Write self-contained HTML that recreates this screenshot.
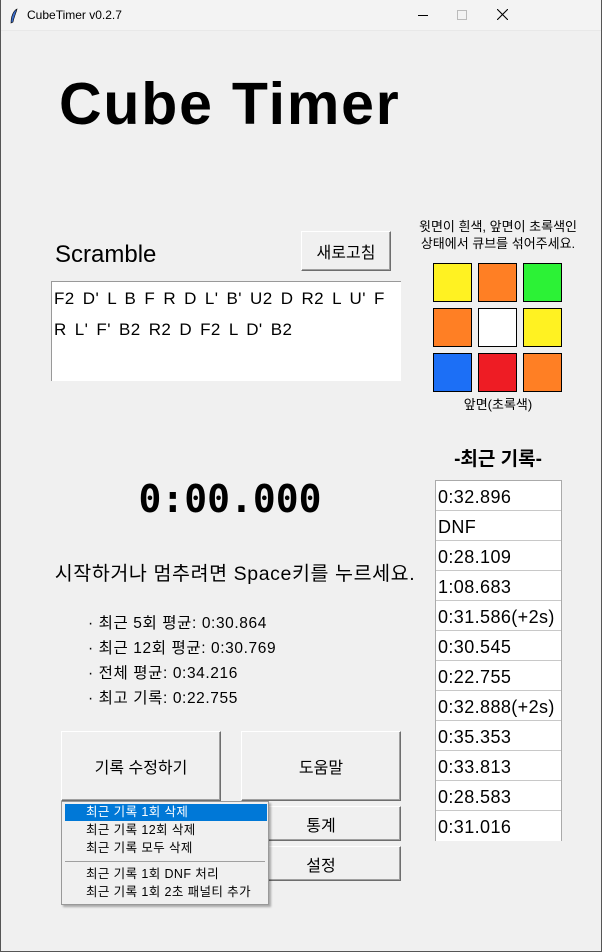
<!DOCTYPE html>
<html><head><meta charset="utf-8"><style>
*{margin:0;padding:0;box-sizing:border-box}
body{width:602px;height:952px;background:#f0f0f0;font-family:"Liberation Sans","Noto Sans CJK KR",sans-serif;position:relative;overflow:hidden;color:#000}
.abs{position:absolute}
.tb{left:0;top:0;width:602px;height:31px;background:#f3f3f3;border-bottom:1px solid #e8e8e8}
.btn{position:absolute;background:#f0f0f0;border:1px solid #fff;border-right-color:#6e6e6e;border-bottom-color:#6e6e6e;box-shadow:inset -1px -1px 0 #a0a0a0;display:flex;align-items:center;justify-content:center;font-size:16px}
.cell{position:absolute;width:39px;height:39px;border:1px solid #000}
.rec{position:absolute;left:436px;width:125px;height:30px;background:#fff;border-bottom:1px solid #c8c8c8;font-size:18px;padding-left:2px;line-height:32px;letter-spacing:0.4px}
.st{position:absolute;left:88px;font-size:15.5px;letter-spacing:0.6px}
.mi{position:absolute;left:3px;width:202px;height:17px;font-size:12.5px;padding-left:21px;line-height:17px;letter-spacing:0.4px}
</style></head><body>
<div class="abs" style="left:0;top:0;width:602px;height:952px;border:1px solid #555;border-top:none;z-index:5;pointer-events:none"></div>
<div class="abs" style="left:111px;top:0;width:42px;height:1px;background:#c33"></div>
<div class="abs tb">
 <svg class="abs" style="left:9px;top:8px" width="10" height="16"><path d="M8 1 C4 3 2 9 2 15 L4 14 C5 9 7 5 8 1Z" fill="#3a6bc9" stroke="#000" stroke-width=".6"/></svg>
 <div class="abs" style="left:27px;top:8px;font-size:12px">CubeTimer v0.2.7</div>
 <div class="abs" style="left:418px;top:15px;width:10px;height:1px;background:#000"></div>
 <div class="abs" style="left:457px;top:10px;width:10px;height:10px;border:1px solid #bbb"></div>
 <svg class="abs" style="left:497px;top:9px" width="11" height="11"><path d="M0 0L11 11M11 0L0 11" stroke="#000" stroke-width="1.1"/></svg>
</div>
<div class="abs" style="left:59px;top:70px;font-size:59px;font-weight:bold;letter-spacing:1.8px">Cube Timer</div>
<div class="abs" style="left:55px;top:241px;font-size:24px">Scramble</div>
<div class="btn" style="left:301px;top:231px;width:90px;height:40px">새로고침</div>
<div class="abs" style="left:51px;top:281px;width:350px;height:100px;background:#fff;border-left:1px solid #999;border-top:1px solid #999;font-size:17px;line-height:31px;padding:1px 0 0 2px;word-spacing:3px;letter-spacing:0.4px;white-space:nowrap">F2 D' L B F R D L' B' U2 D R2 L U' F<br>R L' F' B2 R2 D F2 L D' B2</div>
<div class="abs" style="left:400px;top:218px;width:196px;text-align:center;font-size:13px;line-height:17px">윗면이 흰색, 앞면이 초록색인<br>상태에서 큐브를 섞어주세요.</div>
<div class="cell" style="left:433px;top:263px;background:#fff222"></div>
<div class="cell" style="left:478px;top:263px;background:#ff7f24"></div>
<div class="cell" style="left:523px;top:263px;background:#2cf236"></div>
<div class="cell" style="left:433px;top:308px;background:#ff7f24"></div>
<div class="cell" style="left:478px;top:308px;background:#fff"></div>
<div class="cell" style="left:523px;top:308px;background:#fff222"></div>
<div class="cell" style="left:433px;top:353px;background:#1c6ff6"></div>
<div class="cell" style="left:478px;top:353px;background:#ee1c24"></div>
<div class="cell" style="left:523px;top:353px;background:#ff7f24"></div>
<div class="abs" style="left:400px;top:394px;width:196px;text-align:center;font-size:13px">앞면(초록색)</div>
<div class="abs" style="left:400px;top:444px;width:196px;text-align:center;font-size:19px;font-weight:bold">-최근 기록-</div>
<div class="abs" style="left:435px;top:480px;width:127px;height:361px;border:1px solid #aaa;border-bottom:none;background:#fff"></div>
<div class="rec" style="top:481px">0:32.896</div>
<div class="rec" style="top:511px">DNF</div>
<div class="rec" style="top:541px">0:28.109</div>
<div class="rec" style="top:571px">1:08.683</div>
<div class="rec" style="top:601px">0:31.586(+2s)</div>
<div class="rec" style="top:631px">0:30.545</div>
<div class="rec" style="top:661px">0:22.755</div>
<div class="rec" style="top:691px">0:32.888(+2s)</div>
<div class="rec" style="top:721px">0:35.353</div>
<div class="rec" style="top:751px">0:33.813</div>
<div class="rec" style="top:781px">0:28.583</div>
<div class="rec" style="top:811px;border-bottom:none">0:31.016</div>
<div class="abs" style="left:90px;top:477px;width:280px;text-align:center;font-family:'DejaVu Sans Mono','Liberation Mono',monospace;font-weight:bold;font-size:38px">0:00.000</div>
<div class="abs" style="left:10px;top:557px;width:450px;text-align:center;font-size:19.5px;letter-spacing:0.6px">시작하거나 멈추려면 Space키를 누르세요.</div>
<div class="st" style="top:611px">· 최근 5회 평균: 0:30.864</div>
<div class="st" style="top:636px">· 최근 12회 평균: 0:30.769</div>
<div class="st" style="top:661px">· 전체 평균: 0:34.216</div>
<div class="st" style="top:686px">· 최고 기록: 0:22.755</div>
<div class="btn" style="left:61px;top:731px;width:160px;height:70px">기록 수정하기</div>
<div class="btn" style="left:241px;top:731px;width:160px;height:70px">도움말</div>
<div class="btn" style="left:241px;top:806px;width:160px;height:35px">통계</div>
<div class="btn" style="left:241px;top:846px;width:160px;height:35px">설정</div>
<div class="abs" style="left:61px;top:801px;width:208px;height:104px;background:#f0f0f0;border:1px solid #999;box-shadow:2px 2px 2px rgba(0,0,0,.3)">
 <div class="mi" style="top:2px;background:#0078d7;color:#fff">최근 기록 1회 삭제</div>
 <div class="mi" style="top:20px">최근 기록 12회 삭제</div>
 <div class="mi" style="top:38px">최근 기록 모두 삭제</div>
 <div class="abs" style="left:3px;top:59px;width:200px;height:1px;background:#a0a0a0"></div>
 <div class="mi" style="top:64px">최근 기록 1회 DNF 처리</div>
 <div class="mi" style="top:82px">최근 기록 1회 2초 패널티 추가</div>
</div>
</body></html>
